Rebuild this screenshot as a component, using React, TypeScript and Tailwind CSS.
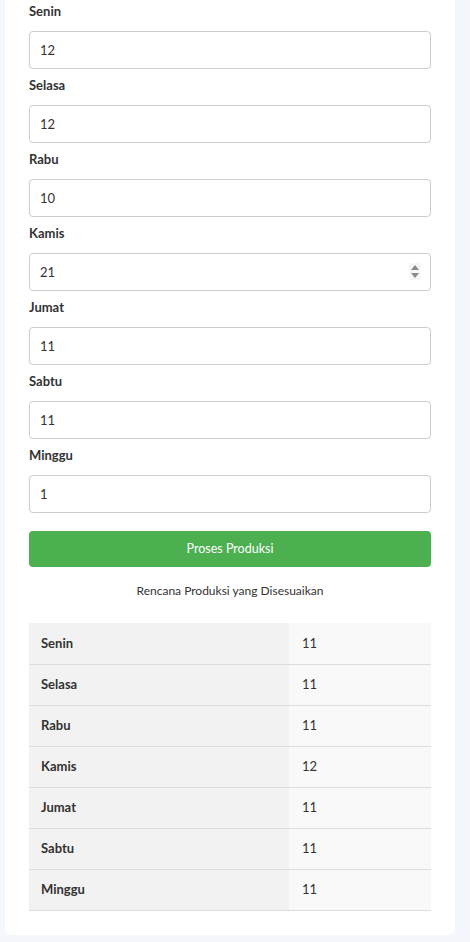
import React from "react";

const days = [
  { name: "Senin", value: "12" },
  { name: "Selasa", value: "12" },
  { name: "Rabu", value: "10" },
  { name: "Kamis", value: "21", spin: true },
  { name: "Jumat", value: "11" },
  { name: "Sabtu", value: "11" },
  { name: "Minggu", value: "1" },
];

const plan = [
  ["Senin", "11"],
  ["Selasa", "11"],
  ["Rabu", "11"],
  ["Kamis", "12"],
  ["Jumat", "11"],
  ["Sabtu", "11"],
  ["Minggu", "11"],
];

function Spinner() {
  return (
    <div className="absolute right-[10px] top-[10px] w-[12px] h-[17px] bg-[#f6f6f6] flex flex-col items-center justify-center gap-[3px]">
      <svg width="8" height="5" viewBox="0 0 8 5">
        <path d="M4 0 L8 5 L0 5 Z" fill="#8a8a8a" />
      </svg>
      <svg width="8" height="5" viewBox="0 0 8 5">
        <path d="M0 0 L8 0 L4 5 Z" fill="#8a8a8a" />
      </svg>
    </div>
  );
}

export default function App() {
  return (
    <div className="min-h-[942px] bg-[#f4f7fc] pl-[5px] pr-[15px] pb-[8px] font-['Lato',sans-serif] text-[#333]">
      {/* Card (top is scrolled out of view) */}
      <div className="bg-white rounded-b-[6px] px-[24px] pt-[1px] pb-[24px]">
        <form className="flex flex-col">
          {days.map((d) => (
            <div key={d.name} className="mb-[6px]">
              <label className="block text-[13px] leading-[20px] font-bold text-[#333] mb-[10px]">
                {d.name}
              </label>
              <div className="relative">
                <input
                  type="text"
                  defaultValue={d.value}
                  className="w-full h-[38px] border border-[#ccc] rounded-[4px] px-[10px] text-[13px] text-[#333] bg-white outline-none"
                />
                {d.spin && <Spinner />}
              </div>
            </div>
          ))}
          <button
            type="button"
            className="mt-[12px] h-[36px] w-full rounded-[4px] bg-[#4caf50] text-white text-[12.5px]"
          >
            Proses Produksi
          </button>
        </form>

        <p className="text-center text-[12px] leading-[20px] mt-[14px] mb-[22px] text-[#333]">
          Rencana Produksi yang Disesuaikan
        </p>

        <table className="w-full border-collapse text-[13px]">
          <tbody>
            {plan.map(([day, val]) => (
              <tr key={day} className="border-b border-[#ddd] h-[41px]">
                <th className="w-[260px] bg-[#f2f2f2] text-left font-bold pl-[12px]">{day}</th>
                <td className="bg-[#f9f9f9] pl-[13px]">{val}</td>
              </tr>
            ))}
          </tbody>
        </table>
      </div>
    </div>
  );
}
